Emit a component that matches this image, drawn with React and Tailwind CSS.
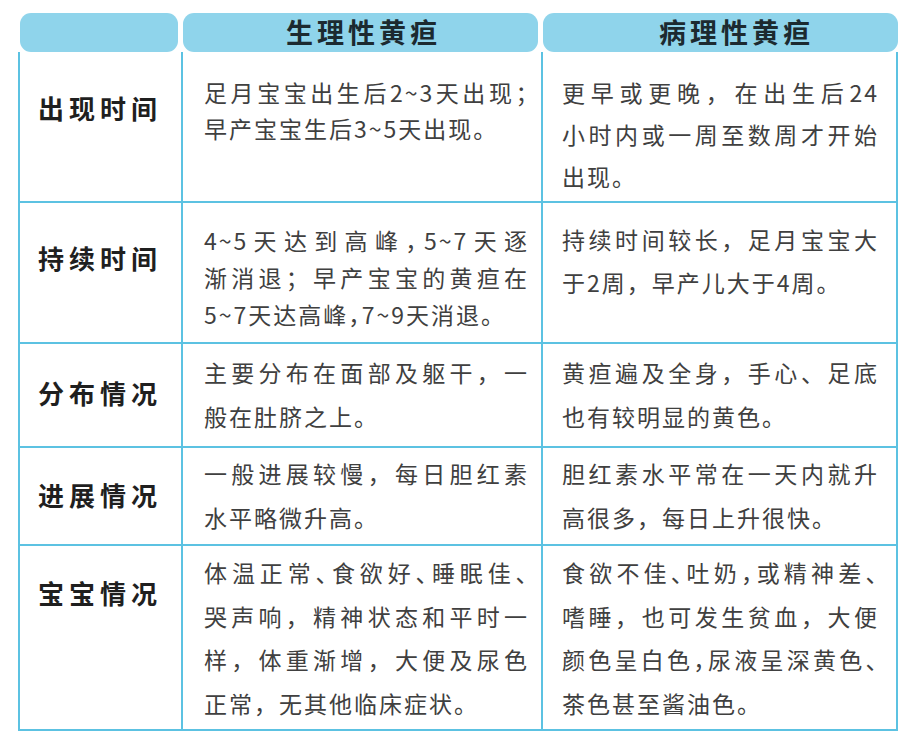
import clsx from "clsx";

// 生理性黄疸 vs 病理性黄疸 comparison table
const rows = [
  {
    label: "出现时间",
    h: "h-[151px]",
    labelPt: "pt-[41px]",
    left: { pt: "pt-[22px]", lh: "leading-[36px]", lines: ["足月宝宝出生后2~3天出现；", "早产宝宝生后3~5天出现。"] },
    right: { pt: "pt-[19px]", lh: "leading-[42px]", lines: ["更早或更晚，在出生后24", "小时内或一周至数周才开始", "出现。"] },
  },
  {
    label: "持续时间",
    h: "h-[141px]",
    labelPt: "pt-[40px]",
    left: { pt: "pt-[19px]", lh: "leading-[37px]", lines: ["4~5天达到高峰，5~7天逐", "渐消退；早产宝宝的黄疸在", "5~7天达高峰，7~9天消退。"] },
    right: { pt: "pt-[15px]", lh: "leading-[43px]", lines: ["持续时间较长，足月宝宝大", "于2周，早产儿大于4周。"] },
  },
  {
    label: "分布情况",
    h: "h-[104px]",
    labelPt: "pt-[34px]",
    left: { pt: "pt-[6px]", lh: "leading-[44px]", lines: ["主要分布在面部及躯干，一", "般在肚脐之上。"] },
    right: { pt: "pt-[6px]", lh: "leading-[44px]", lines: ["黄疸遍及全身，手心、足底", "也有较明显的黄色。"] },
  },
  {
    label: "进展情况",
    h: "h-[98px]",
    labelPt: "pt-[32px]",
    left: { pt: "pt-[3px]", lh: "leading-[44px]", lines: ["一般进展较慢，每日胆红素", "水平略微升高。"] },
    right: { pt: "pt-[3px]", lh: "leading-[44px]", lines: ["胆红素水平常在一天内就升", "高很多，每日上升很快。"] },
  },
  {
    label: "宝宝情况",
    h: "h-[185px]",
    labelPt: "pt-[32px]",
    left: { pt: "pt-[5px]", lh: "leading-[43.5px]", lines: ["体温正常、食欲好、睡眠佳、", "哭声响，精神状态和平时一", "样，体重渐增，大便及尿色", "正常，无其他临床症状。"] },
    right: { pt: "pt-[5px]", lh: "leading-[43.5px]", lines: ["食欲不佳、吐奶，或精神差、", "嗜睡，也可发生贫血，大便", "颜色呈白色，尿液呈深黄色、", "茶色甚至酱油色。"] },
  },
];

const font = "font-['Noto_Sans_CJK_SC','Noto_Sans',sans-serif]";

function Lines({ cell, className }) {
  return (
    <div className={clsx(cell.pt, cell.lh, className)}>
      {cell.lines.map((t, i) => (
        <div
          key={i}
          className={clsx(
            "whitespace-nowrap",
            i < cell.lines.length - 1 && "text-justify [text-align-last:justify]",
            t.length >= 13 && "[font-feature-settings:'halt']"
          )}
        >
          {t}
        </div>
      ))}
    </div>
  );
}

export default function App() {
  return (
    <div lang="zh-CN" className={clsx("w-[912px] h-[742px] overflow-hidden bg-white pt-[13px] pl-[18px]", font)}>
      {/* header */}
      <div className="flex h-[39px] w-[880px] pl-[2px] gap-[5px]">
        <div className="w-[158px] rounded-[11px] bg-[#8fd4eb]" />
        <div className="w-[355px] rounded-[11px] bg-[#8fd4eb] flex items-center justify-center pl-[6px] text-[27px] font-bold tracking-[4px] text-[#1c2a30]">
          生理性黄疸
        </div>
        <div className="flex-1 rounded-[11px] bg-[#8fd4eb] flex items-center justify-center pl-[32px] text-[27px] font-bold tracking-[4px] text-[#1c2a30]">
          病理性黄疸
        </div>
      </div>

      {/* body */}
      <div className="w-[880px] border-l-2 border-r-2 border-[#5cc2e2]">
        {rows.map((r) => (
          <div
            key={r.label}
            className={clsx("grid grid-cols-[163px_360px_1fr] border-b-2 border-[#5cc2e2]", r.h)}
          >
            <div
              className={clsx(
                "border-r-2 border-[#5cc2e2] pl-[18px] text-[26px] leading-[30px] font-bold tracking-[5px] text-[#1f1f1f]",
                r.labelPt
              )}
            >
              {r.label}
            </div>
            <Lines
              cell={r.left}
              className="min-w-0 overflow-hidden border-r-2 border-[#5cc2e2] pl-[21px] pr-[12px] text-[23px] tracking-[2px] text-[#404040]"
            />
            <Lines
              cell={r.right}
              className="min-w-0 overflow-hidden pl-[19px] pr-[17px] text-[23px] tracking-[2px] text-[#404040]"
            />
          </div>
        ))}
      </div>
    </div>
  );
}
